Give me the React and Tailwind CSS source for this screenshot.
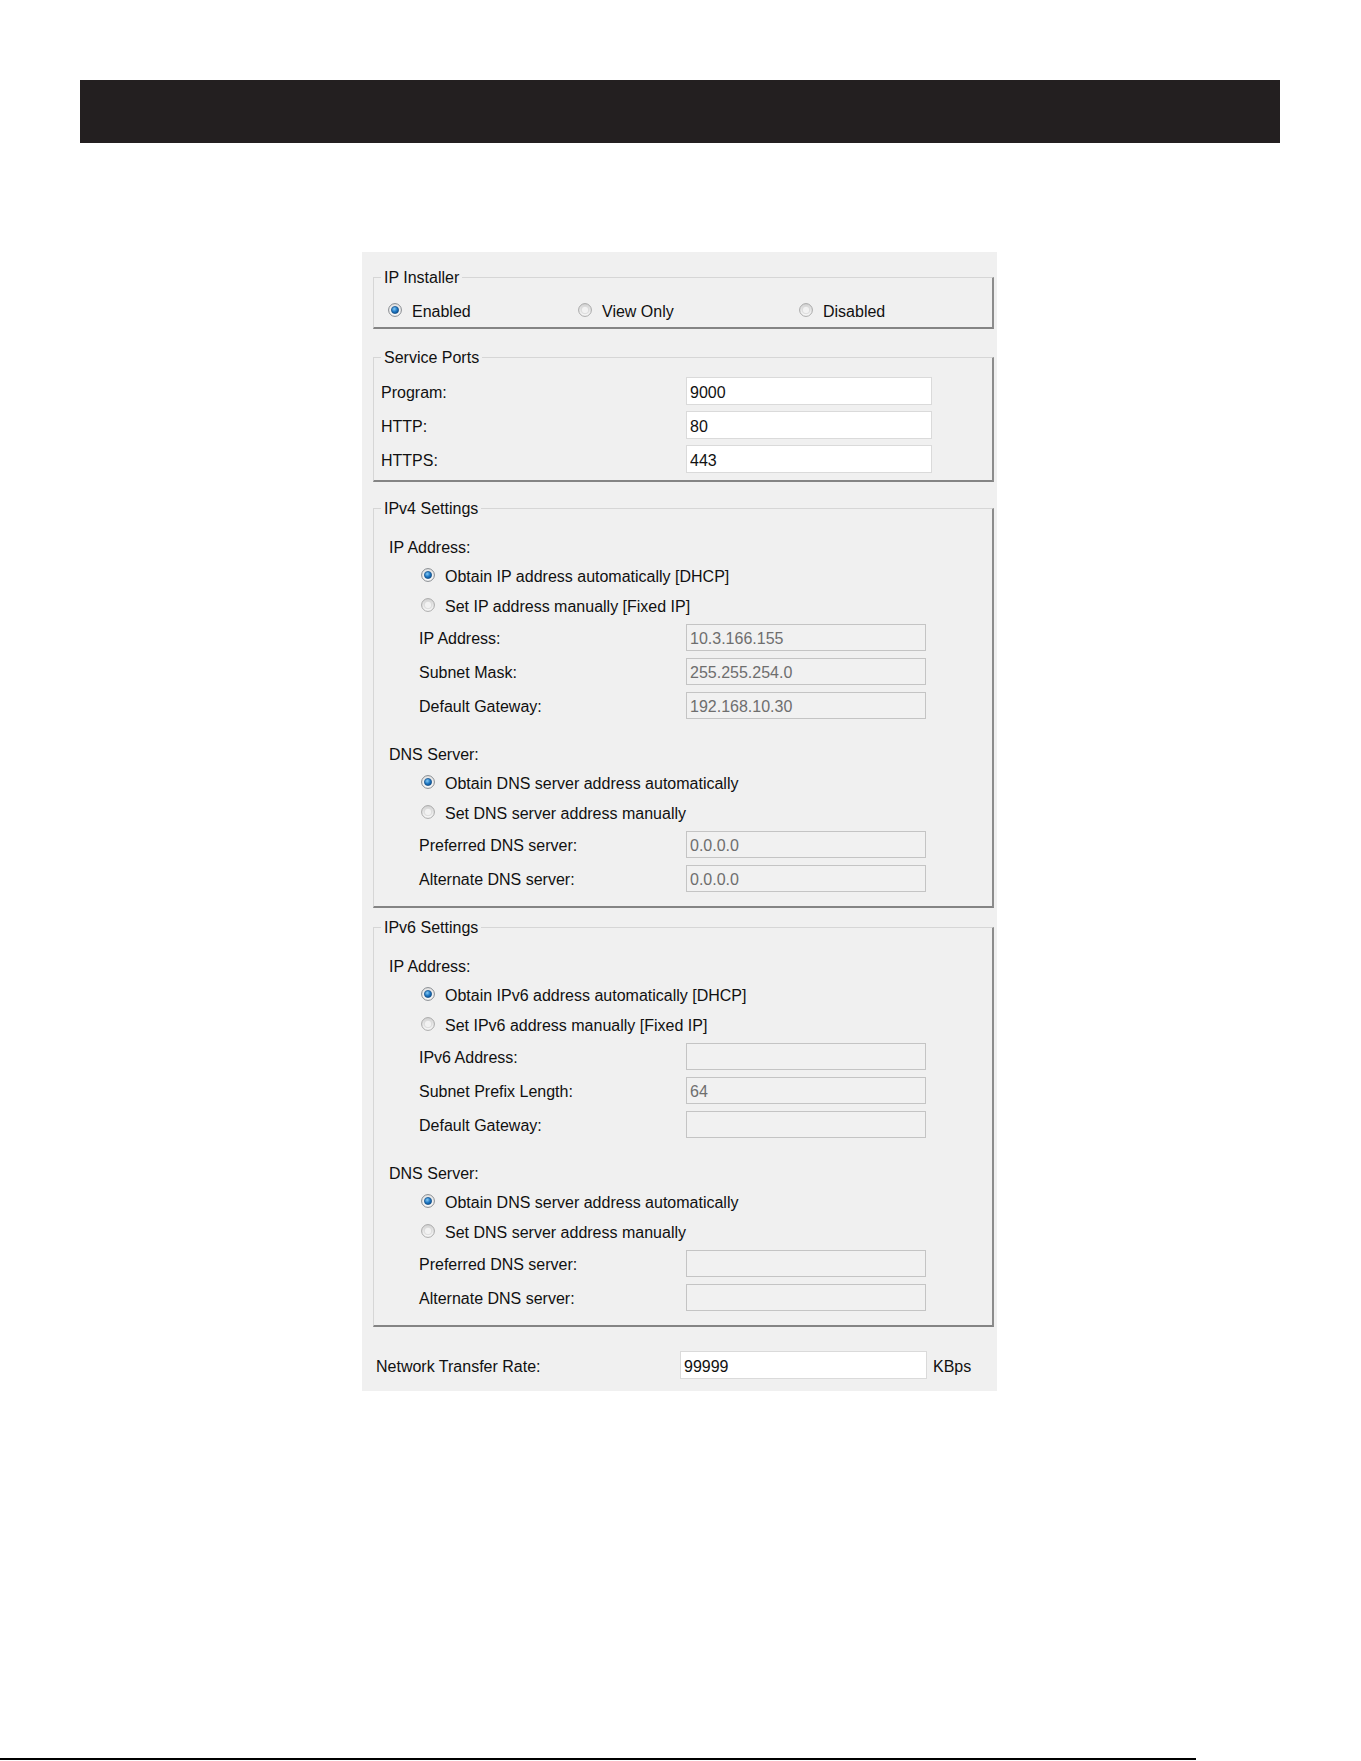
import React from "react";

const ipv4Fields = {
  address: [
    { label: "IP Address:", value: "10.3.166.155" },
    { label: "Subnet Mask:", value: "255.255.254.0" },
    { label: "Default Gateway:", value: "192.168.10.30" },
  ],
  dns: [
    { label: "Preferred DNS server:", value: "0.0.0.0" },
    { label: "Alternate DNS server:", value: "0.0.0.0" },
  ],
};

const ipv6Fields = {
  address: [
    { label: "IPv6 Address:", value: "" },
    { label: "Subnet Prefix Length:", value: "64" },
    { label: "Default Gateway:", value: "" },
  ],
  dns: [
    { label: "Preferred DNS server:", value: "" },
    { label: "Alternate DNS server:", value: "" },
  ],
};

function Radio({ checked }) {
  if (checked) {
    return (
      <svg width="14" height="14" viewBox="0 0 14 14" className="shrink-0">
        <defs>
          <linearGradient id="ringOn" x1="0" y1="0" x2="0" y2="1">
            <stop offset="0" stopColor="#e4e4e4" />
            <stop offset="1" stopColor="#fafafa" />
          </linearGradient>
          <radialGradient id="dotOn" cx="0.4" cy="0.35" r="0.7">
            <stop offset="0" stopColor="#86cbf5" />
            <stop offset="0.55" stopColor="#1f78c4" />
            <stop offset="1" stopColor="#0b4c8a" />
          </radialGradient>
        </defs>
        <circle cx="7" cy="7" r="6.4" fill="url(#ringOn)" stroke="#868a8f" />
        <circle cx="7" cy="7" r="3.6" fill="url(#dotOn)" stroke="#134f88" strokeWidth="0.7" />
      </svg>
    );
  }
  return (
    <svg width="14" height="14" viewBox="0 0 14 14" className="shrink-0">
      <defs>
        <linearGradient id="ringOff" x1="0" y1="0" x2="0" y2="1">
          <stop offset="0" stopColor="#d2d2d2" />
          <stop offset="1" stopColor="#fbfbfb" />
        </linearGradient>
      </defs>
      <circle cx="7" cy="7" r="6.4" fill="url(#ringOff)" stroke="#a9a9a9" />
      <circle cx="7" cy="7" r="3.8" fill="#f2f2f2" stroke="#d2d2d2" strokeWidth="0.7" />
    </svg>
  );
}

function RadioOption({ checked, children, className = "" }) {
  return (
    <label className={`flex items-center gap-[10px] ${className}`}>
      <Radio checked={checked} />
      <span className="pt-[3px]">{children}</span>
    </label>
  );
}

function Group({ title, className = "", children }) {
  return (
    <fieldset
      className={`ml-[11px] mr-[3px] border-t border-l border-r-2 border-b-2 border-t-[#d6d6d6] border-l-[#d6d6d6] border-r-[#8c8c8c] border-b-[#848484] ${className}`}
    >
      <legend className="ml-[7px] px-[3px] pt-[2px] leading-[18px]">{title}</legend>
      {children}
    </fieldset>
  );
}

function TextBox({ value, disabled, className = "" }) {
  return (
    <input
      readOnly
      disabled={disabled}
      value={value}
      className={`px-[3px] pt-[3px] border leading-none outline-none ${
        disabled
          ? "bg-[#f1f1f1] border-[#c4c4c4] text-[#6e6e6e]"
          : "bg-white border-[#dadada] text-[#111111]"
      } ${className}`}
    />
  );
}

function AddressBlock({ fields, autoLabel, manualLabel }) {
  return (
    <>
      <div className="h-[30px] pl-[47px] flex items-center">
        <RadioOption checked>{autoLabel}</RadioOption>
      </div>
      <div className="h-[30px] pl-[47px] flex items-center">
        <RadioOption>{manualLabel}</RadioOption>
      </div>
      {fields.map((f) => (
        <div key={f.label} className="h-[34px] pl-[45px] flex items-center">
          <span className="w-[267px] shrink-0 pt-[3px]">{f.label}</span>
          <TextBox disabled value={f.value} className="w-[240px] h-[27px]" />
        </div>
      ))}
    </>
  );
}

function IpSettings({ title, fields, ipAuto, ipManual, className }) {
  return (
    <Group title={title} className={`pt-[14px] pb-[11px] ${className}`}>
      <div className="h-[28px] pl-[15px] flex items-center">
        <span className="pt-[3px]">IP Address:</span>
      </div>
      <AddressBlock fields={fields.address} autoLabel={ipAuto} manualLabel={ipManual} />
      <div className="mt-[17px] h-[28px] pl-[15px] flex items-center">
        <span className="pt-[3px]">DNS Server:</span>
      </div>
      <AddressBlock
        fields={fields.dns}
        autoLabel="Obtain DNS server address automatically"
        manualLabel="Set DNS server address manually"
      />
    </Group>
  );
}

export default function App() {
  return (
    <div className="w-full h-[1761px] bg-white flex flex-col text-[16px] text-[#111111] font-['Liberation_Sans',Arial,sans-serif]">
      <div className="mt-[80px] ml-[80px] w-[1200px] h-[63px] bg-[#231f20] shrink-0" />

      <div className="mt-[109px] ml-[362px] w-[635px] bg-[#f0f0f0] pt-[15px] pb-[9px] shrink-0">
        <Group title="IP Installer" className="pt-[11px] pb-[5px]">
          <div className="h-[24px] pl-[14px] flex items-center">
            <RadioOption checked className="w-[190px]">Enabled</RadioOption>
            <RadioOption className="w-[221px]">View Only</RadioOption>
            <RadioOption>Disabled</RadioOption>
          </div>
        </Group>

        <Group title="Service Ports" className="mt-[18px] pt-[7px] pb-[4px]">
          {[
            ["Program:", "9000"],
            ["HTTP:", "80"],
            ["HTTPS:", "443"],
          ].map(([label, value]) => (
            <div key={label} className="h-[34px] pl-[7px] flex items-center">
              <span className="w-[305px] shrink-0 pt-[3px]">{label}</span>
              <TextBox value={value} className="w-[246px] h-[28px]" />
            </div>
          ))}
        </Group>

        <IpSettings
          title="IPv4 Settings"
          className="mt-[16px]"
          fields={ipv4Fields}
          ipAuto="Obtain IP address automatically [DHCP]"
          ipManual="Set IP address manually [Fixed IP]"
        />

        <IpSettings
          title="IPv6 Settings"
          className="mt-[9px]"
          fields={ipv6Fields}
          ipAuto="Obtain IPv6 address automatically [DHCP]"
          ipManual="Set IPv6 address manually [Fixed IP]"
        />

        <div className="mt-[21px] h-[34px] pl-[14px] flex items-center">
          <span className="w-[304px] shrink-0 pt-[3px]">Network Transfer Rate:</span>
          <TextBox value="99999" className="w-[247px] h-[28px]" />
          <span className="ml-[6px] pt-[3px]">KBps</span>
        </div>
      </div>

      <div className="mt-auto mb-[1px] w-[1196px] h-[2px] bg-black shrink-0" />
    </div>
  );
}
